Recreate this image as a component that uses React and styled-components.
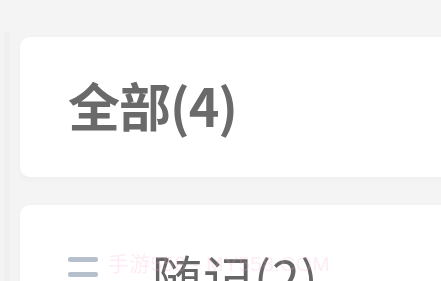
import React from 'react';
import styled, { createGlobalStyle } from 'styled-components';

const GlobalStyle = createGlobalStyle`
  html, body {
    margin: 0;
    padding: 0;
    background: #f4f4f4;
    overflow: hidden;
  }
  body {
    font-family: "Noto Sans CJK SC", "Noto Sans", sans-serif;
  }
`;

const Page = styled.div`
  width: 441px;
  height: 281px;
  position: relative;
  overflow: hidden;
  background: #f4f4f4;
  padding: 37px 0 0 20px;
  box-sizing: border-box;
  display: flex;
  flex-direction: column;
  gap: 28px;

  &::before {
    content: '';
    position: absolute;
    left: 4px;
    top: 32px;
    bottom: 0;
    width: 6px;
    background: #f0f0f0;
  }
`;

const Card = styled.div`
  background: #ffffff;
  border-radius: 10px 0 0 10px;
  margin-right: -20px;
  height: ${props => props.height}px;
  flex-shrink: 0;
  display: flex;
  align-items: ${props => props.align || 'center'};
  padding-left: 48px;
  box-shadow: 0 2px 6px rgba(0, 0, 0, 0.03);
`;

const Title = styled.div`
  font-size: 52px;
  font-weight: 700;
  color: #6a6a6a;
  line-height: 1;
  letter-spacing: -1px;
  margin-top: -5px;
`;

const Row = styled.div`
  display: flex;
  align-items: flex-start;
  padding-top: 46px;
  gap: 54px;
`;

const MenuIcon = styled.div`
  width: 30px;
  display: flex;
  flex-direction: column;
  gap: 10px;
  padding-top: 6px;

  span {
    display: block;
    height: 5px;
    border-radius: 2px;
    background: #b6c0cc;
  }
`;

const Label = styled.div`
  font-size: 50px;
  font-weight: 400;
  color: #666666;
  line-height: 1;
  letter-spacing: 1px;
`;

const Watermark = styled.div`
  position: absolute;
  left: 108px;
  top: 247px;
  font-size: 21px;
  font-family: "Liberation Sans", "Noto Sans CJK SC", sans-serif;
  color: rgba(250, 170, 210, 0.22);
  letter-spacing: 0.3px;
  white-space: nowrap;
`;

export default function App() {
  return (
    <>
      <GlobalStyle />
      <Page>
        <Card height={140}>
          <Title>全部(4)</Title>
        </Card>
        <Card height={120} align="flex-start">
          <Row>
            <MenuIcon>
              <span />
              <span />
              <span />
            </MenuIcon>
            <Label>随记(2)</Label>
          </Row>
        </Card>
        <Watermark>手游558 - MY558.COM</Watermark>
      </Page>
    </>
  );
}
